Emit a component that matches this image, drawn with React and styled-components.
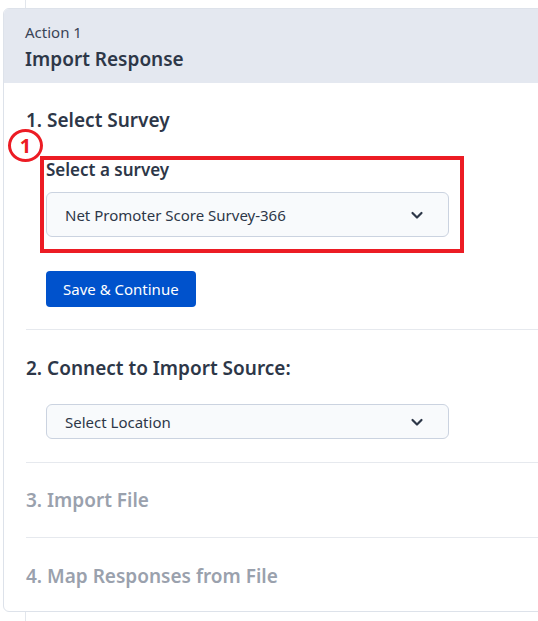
import React from 'react';
import styled, { createGlobalStyle } from 'styled-components';

const GlobalStyle = createGlobalStyle`
    body {
        margin: 0;
        background: #fff;
        font-family: "Noto Sans", "Open Sans", sans-serif;
        color: #2d3748;
        overflow: hidden;
    }
`;

const Page = styled.div`
    position: relative;
    width: 538px;
    height: 621px;
    overflow: hidden;

    & > .rail {
        position: absolute;
        left: 25px;
        top: 0;
        bottom: 0;
        width: 1px;
        background: #e2e6ec;
    }
`;

const Card = styled.div`
    position: relative;
    margin: 8px 0 0 3px;
    width: 580px;
    height: 604px;
    box-sizing: border-box;
    border: 1px solid #dde2ea;
    border-radius: 6px;
    background: #fff;
`;

const CardHead = styled.div`
    background: #e4e8f0;
    height: 74px;
    box-sizing: border-box;
    padding: 12px 0 0 21px;
    border-radius: 5px 5px 0 0;

    & > .small {
        font-size: 15px;
        line-height: 22px;
        color: #3a4456;
    }

    & > .title {
        margin-top: 4px;
        font-size: 19px;
        line-height: 24px;
        font-weight: 600;
        color: #2d3748;
    }
`;

const CardBody = styled.div`
    padding: 0 0 0 22px;
`;

const Step = styled.div`
    position: relative;
    padding: ${p => p.$pad || '22px 0 22px 0'};
    border-top: ${p => (p.$first ? 'none' : '1px solid #e6e9ee')};
`;

const StepTitle = styled.div`
    font-size: 19px;
    line-height: 24px;
    font-weight: 600;
    color: ${p => (p.$muted ? '#9aa1ad' : '#2d3748')};
`;

const Field = styled.div`
    margin-left: 20px;
    width: 403px;
`;

const Label = styled.div`
    font-size: 17px;
    line-height: 22px;
    font-weight: 600;
    color: #2d3748;
    margin-bottom: 11px;
`;

const SelectBox = styled.div`
    display: flex;
    align-items: center;
    justify-content: space-between;
    height: ${p => p.$h}px;
    box-sizing: border-box;
    padding: 0 24px 0 18px;
    background: #f8fafc;
    border: 1px solid #cbd3e0;
    border-radius: 6px;
    font-size: 15px;
    color: #2d3748;
`;

const Button = styled.button`
    display: block;
    margin: 34px 0 0 20px;
    height: 36px;
    padding: 0 17px;
    border: none;
    border-radius: 4px;
    background: #0052cc;
    color: #fff;
    font-family: inherit;
    font-size: 15px;
`;

const Highlight = styled.div`
    position: absolute;
    left: 14px;
    top: 73px;
    width: 424px;
    height: 97px;
    box-sizing: border-box;
    border: 4px solid #ec1c24;
`;

const Marker = styled.div`
    position: absolute;
    left: -18px;
    top: 46px;
    width: 35px;
    height: 33px;
    box-sizing: border-box;
    border: 3.5px solid #ec1c24;
    border-radius: 50%;
    background: transparent;
    display: flex;
    align-items: center;
    justify-content: center;
    color: #ec1c24;
    font-weight: 700;
    font-size: 20px;
    line-height: 1;
`;

const Chevron = () => (
    <svg width="14" height="14" viewBox="0 0 14 14" fill="none">
        <path d="M2.5 5 L7 9.5 L11.5 5" stroke="#2d3748" strokeWidth="2.2" strokeLinecap="round" strokeLinejoin="round" />
    </svg>
);

const App = () => {
    return (
        <Page>
            <GlobalStyle />
            <div className="rail" />
            <Card>
                <CardHead>
                    <div className="small">Action 1</div>
                    <div className="title">Import Response</div>
                </CardHead>
                <CardBody>
                    <Step $first $pad="25px 0 22px 0">
                        <StepTitle>1. Select Survey</StepTitle>
                        <Field style={{ marginTop: 27 }}>
                            <Label>Select a survey</Label>
                            <SelectBox $h={45}>
                                <span>Net Promoter Score Survey-366</span>
                                <Chevron />
                            </SelectBox>
                        </Field>
                        <Button>Save &amp; Continue</Button>
                        <Highlight />
                        <Marker>1</Marker>
                    </Step>
                    <Step $pad="26px 0 23px 0">
                        <StepTitle>2. Connect to Import Source:</StepTitle>
                        <Field style={{ marginTop: 24 }}>
                            <SelectBox $h={35}>
                                <span>Select Location</span>
                                <Chevron />
                            </SelectBox>
                        </Field>
                    </Step>
                    <Step $pad="25px 0 25px 0">
                        <StepTitle $muted>3. Import File</StepTitle>
                    </Step>
                    <Step $pad="26px 0 24px 0">
                        <StepTitle $muted>4. Map Responses from File</StepTitle>
                    </Step>
                </CardBody>
            </Card>
        </Page>
    );
};

export default App;
